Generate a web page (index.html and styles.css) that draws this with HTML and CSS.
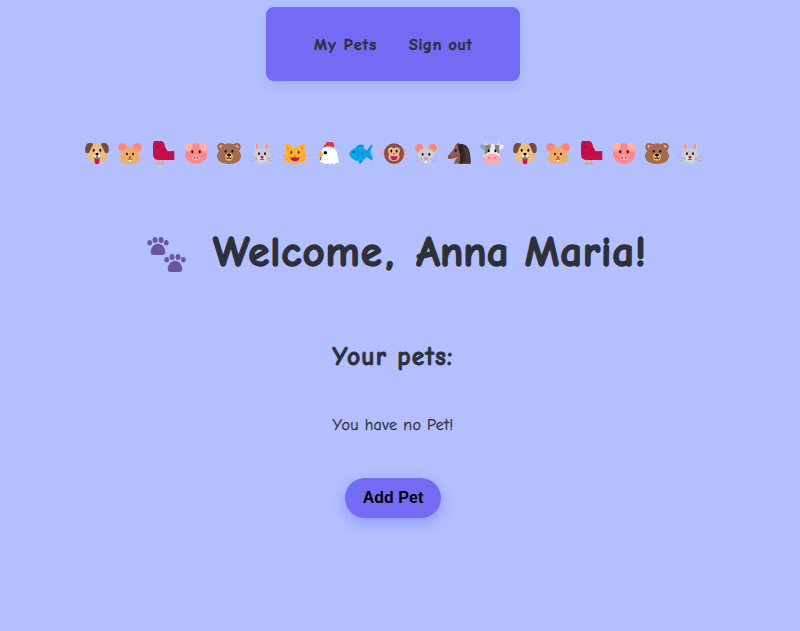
FILE: index.html
```html
<!DOCTYPE html>
<html lang="en">
<head>
<meta charset="utf-8">
<title>My Pets</title>
<link rel="stylesheet" href="styles.css">
</head>
<body>
<svg class="sprites" aria-hidden="true">
  <symbol id="dog" viewBox="0 0 72 72">
    <path fill="#eabd78" d="M17 9Q36 3 55 9L66 42Q66 65 36 65Q6 65 6 42Z"/>
    <path fill="#754b3d" d="M17 6Q3 4 1 20Q-2 37 8 37Q14 36 17 24L25 8ZM55 6Q69 4 71 20Q73 37 64 37Q58 36 55 24L47 8Z"/>
    <path fill="#f8dfba" d="M32 32Q36 27 40 32L48 44Q52 55 36 55Q20 55 24 44Z"/>
    <path fill="#d70c55" d="M29 53h14v9q-1 8-7 8t-7-8Z"/>
    <path fill="none" stroke="#111" stroke-width="2" d="M36 40v10M25 49q4 7 11 1q7 6 11-1"/>
    <ellipse cx="36" cy="39" rx="5" ry="3.5"/><ellipse cx="26" cy="28" rx="2.7" ry="4.5"/><ellipse cx="46" cy="28" rx="2.7" ry="4.5"/>
  </symbol>
  <symbol id="hamster" viewBox="0 0 72 72">
    <circle cx="15" cy="20" r="14" fill="#f3ae59"/><circle cx="57" cy="20" r="14" fill="#f3ae59"/>
    <circle cx="14" cy="19" r="12" fill="#ff827f"/><circle cx="58" cy="19" r="12" fill="#ff827f"/>
    <path fill="#f0ac60" d="M15 27Q36 10 57 27L67 50Q66 69 36 69Q6 69 5 50Z"/>
    <ellipse cx="36" cy="53" rx="13" ry="11" fill="#f3b768"/>
    <ellipse cx="27" cy="39" rx="2.6" ry="4"/><ellipse cx="45" cy="39" rx="2.6" ry="4"/>
    <ellipse cx="36" cy="48" rx="4" ry="3" fill="#ef3564"/><path fill="#fff" d="M33 56h6v5h-6z"/>
    <path fill="none" stroke="#47302d" stroke-width="2" d="M36 49v4M29 52q2 6 7 2q5 4 7-2"/>
  </symbol>
  <symbol id="bird" viewBox="0 0 72 72">
    <path fill="none" stroke="#f4a828" stroke-width="3.5" d="M24 56v12M36 56v12M14 68h15M29 68h14"/>
    <path fill="#f0a13a" d="M10 12L3 19L9 22Z"/>
    <path fill="#c90d49" d="M9 0H30Q41 2 42 17L50 31L70 30V57H23Q6 57 6 38V14Q6 4 9 0Z"/>
    <path fill="none" stroke="#a60b40" stroke-width="2" d="M33 22Q40 40 58 38"/>
    <circle cx="19" cy="17" r="3" fill="#40202d"/>
  </symbol>
  <symbol id="pig" viewBox="0 0 72 72">
    <ellipse cx="36" cy="38" rx="33" ry="31" fill="#ff8789"/>
    <path fill="#ffb39e" d="M5 7Q17 4 27 12Q24 28 9 33Q-1 25 5 7ZM67 7Q55 4 45 12Q48 28 63 33Q73 25 67 7Z"/>
    <ellipse cx="25" cy="32" rx="3" ry="4.5"/><ellipse cx="47" cy="32" rx="3" ry="4.5"/>
    <ellipse cx="36" cy="50" rx="12" ry="8" fill="#ffb2a5"/>
    <ellipse cx="31" cy="50" rx="2.5" ry="3.5" fill="#dd385c"/><ellipse cx="41" cy="50" rx="2.5" ry="3.5" fill="#dd385c"/>
  </symbol>
  <symbol id="bear" viewBox="0 0 72 72">
    <circle cx="13" cy="18" r="12" fill="#9b6245"/><circle cx="59" cy="18" r="12" fill="#9b6245"/>
    <circle cx="13" cy="17" r="6" fill="#eeb45e"/><circle cx="59" cy="17" r="6" fill="#eeb45e"/>
    <path fill="#a56b4c" d="M36 7Q58 7 65 29Q73 37 72 48Q68 69 36 69Q4 69 0 48Q-1 37 7 29Q14 7 36 7Z"/>
    <ellipse cx="36" cy="48" rx="12" ry="11" fill="#efb665"/>
    <ellipse cx="26" cy="31" rx="2.7" ry="4"/><ellipse cx="46" cy="31" rx="2.7" ry="4"/><ellipse cx="36" cy="42" rx="6" ry="3.5"/>
    <path fill="none" stroke="#111" stroke-width="2.3" d="M36 43v7M27 49q2 7 9 2q7 5 9-2"/>
  </symbol>
  <symbol id="rabbit" viewBox="0 0 72 72">
    <path fill="#cacbd5" d="M15 32V10Q18-4 26 6L31 23H41L46 6Q54-4 57 10V32Q65 40 63 54Q56 69 36 69Q16 69 9 54Q7 40 15 32Z"/>
    <path fill="#ff888b" d="M19 23Q16 2 23 7L27 23ZM53 23Q56 2 49 7L45 23Z"/>
    <ellipse cx="36" cy="53" rx="12" ry="10" fill="#dedee4"/>
    <path fill="none" stroke="#9899a5" stroke-width="1.7" d="M1 47l20 5M4 60l18-5M71 47l-20 5M68 60l-18-5"/>
    <ellipse cx="27" cy="38" rx="2.6" ry="4"/><ellipse cx="45" cy="38" rx="2.6" ry="4"/>
    <ellipse cx="36" cy="48" rx="5" ry="3.5" fill="#e51559"/>
    <path fill="none" stroke="#252530" stroke-width="2" d="M36 48v7M30 54q2 5 6 1q4 4 6-1"/>
  </symbol>
  <symbol id="cat" viewBox="0 0 72 72">
    <path fill="#ffb22c" d="M8 7Q19 8 27 18H45Q53 8 64 7L67 40L72 45L65 50L70 59L61 61Q52 69 36 69Q20 69 11 61L2 59L7 50L0 45L5 40Z"/>
    <path fill="#ff8d3d" d="M12 14L21 21L12 28ZM60 14L51 21L60 28Z"/>
    <path fill="none" stroke="#ef9b20" stroke-width="2.4" d="M1 44h13M3 58l12-6M71 44H58M69 58l-12-6"/>
    <ellipse cx="25" cy="34" rx="2.7" ry="5" fill="#4b301c"/><ellipse cx="47" cy="34" rx="2.7" ry="5" fill="#4b301c"/>
    <path fill="#b41871" d="M22 48Q29 51 36 48Q43 51 50 48Q48 61 36 61Q24 61 22 48Z"/><path fill="#ff5377" d="M32 43h8l-4 5Z"/>
  </symbol>
  <symbol id="chicken" viewBox="0 0 72 72">
    <path fill="#f42d32" d="M24 19Q21 12 29 10Q32-2 41 4Q53 0 55 13L51 27ZM13 47Q9 57 17 61L23 52Z"/>
    <path fill="#fff" stroke="#d8d9e0" stroke-width="2" d="M16 34Q18 16 39 17Q62 17 65 43L69 66L61 65L56 70L49 67L42 70L35 67L27 70L21 65L12 65L17 51Z"/>
    <path fill="#ffad25" d="M15 32Q6 36 4 44L18 46Q26 38 15 32Z"/><circle cx="28" cy="35" r="5"/>
  </symbol>
  <symbol id="fish" viewBox="0 0 72 72">
    <path fill="#0898df" d="M20 18Q29 6 46 13L42 24ZM28 55L32 69Q42 65 43 52Z"/>
    <path fill="#08a8ee" d="M0 39Q11 17 32 18Q46 19 53 29L66 11Q70 9 71 16Q63 27 65 37Q74 49 69 59L53 48Q44 60 26 60Q8 58 0 39Z"/>
    <path fill="none" stroke="#087fc1" stroke-width="2.3" d="M24 22q10 16 0 33M38 29l3 5l-3 5l3 5M48 33l3 5l-3 5M65 18L54 32M66 52L54 43"/>
    <circle cx="14" cy="33" r="3" fill="#16334a"/>
  </symbol>
  <symbol id="monkey" viewBox="0 0 72 72">
    <circle cx="8" cy="34" r="9" fill="#ffa18e"/><circle cx="64" cy="34" r="9" fill="#ffa18e"/>
    <ellipse cx="36" cy="38" rx="30" ry="31" fill="#8a5142"/>
    <path fill="#efb487" d="M36 22Q50 13 54 27Q55 33 51 38Q58 60 36 61Q14 60 21 38Q17 33 18 27Q22 13 36 22Z"/>
    <ellipse cx="28" cy="30" rx="2.8" ry="4.5"/><ellipse cx="44" cy="30" rx="2.8" ry="4.5"/><path fill="#bd1779" d="M25 46H47Q46 58 36 58Q26 58 25 46Z"/>
    <path stroke="#78503f" stroke-width="2" d="M33 38h6"/>
  </symbol>
  <symbol id="mouse" viewBox="0 0 72 72">
    <circle cx="17" cy="22" r="16" fill="#cacbd4"/><circle cx="55" cy="22" r="16" fill="#cacbd4"/>
    <circle cx="16" cy="21" r="13" fill="#ff8582"/><circle cx="56" cy="21" r="13" fill="#ff8582"/>
    <path fill="#cbccd5" d="M17 28Q36 15 55 28Q66 49 57 59Q47 64 36 70Q25 64 15 59Q6 49 17 28Z"/>
    <path fill="none" stroke="#a5a6b3" stroke-width="1.6" d="M3 48l21 5M6 61l18-6M69 48l-21 5M66 61l-18-6"/>
    <ellipse cx="26" cy="40" rx="2.7" ry="4"/><ellipse cx="46" cy="40" rx="2.7" ry="4"/><ellipse cx="36" cy="53" rx="5" ry="4" fill="#ff7b80"/><path fill="#fff" d="M34 60h4v5h-4z"/>
  </symbol>
  <symbol id="horse" viewBox="0 0 72 72">
    <path fill="#352a2e" d="M27 13Q38 4 54 12Q71 20 71 68H38Z"/>
    <path fill="#93594a" d="M27 10L34 5L42 17L47 68H21Q25 55 31 48Q20 55 8 54Q0 52 3 44L18 27Z"/>
    <path fill="#2b2227" d="M33 7L44 17Q52 32 47 68H37Q43 42 34 25Z"/>
    <path fill="none" stroke="#745244" stroke-width="2" d="M50 17q11 17 7 50M59 23q7 18 5 44"/>
    <ellipse cx="26" cy="29" rx="3" ry="4" fill="#1b1719"/><path stroke="#58362e" stroke-width="2" d="M4 48l9-2"/>
  </symbol>
  <symbol id="cow" viewBox="0 0 72 72">
    <path fill="#fde4b4" d="M16 0Q14 11 27 11L24 17Q8 14 16 0ZM56 0Q58 11 45 11L48 17Q64 14 56 0Z"/>
    <path fill="#9a9ba1" d="M17 17Q4 5 0 15Q3 28 17 27Z"/><path fill="#ece9ef" d="M55 17Q68 5 72 15Q69 28 55 27Z"/>
    <path fill="#eeeaf0" d="M15 12Q36 5 57 12L60 50H12Z"/>
    <path fill="#85868d" d="M15 12L33 10Q32 34 13 42ZM44 10L57 13L59 40Q44 33 44 10Z"/>
    <ellipse cx="36" cy="54" rx="25" ry="16" fill="#ffaaa8"/><ellipse cx="26" cy="29" rx="3" ry="4.5"/><ellipse cx="46" cy="29" rx="3" ry="4.5"/>
    <ellipse cx="27" cy="51" rx="2.5" ry="3.5" fill="#e76c84"/><ellipse cx="45" cy="51" rx="2.5" ry="3.5" fill="#e76c84"/>
  </symbol>
</svg>
<nav class="nav"><a href="#" class="nav-pets">My Pets</a><a href="#" class="nav-out">Sign out</a></nav>
<main>
  <div class="pets" aria-hidden="true">
    <svg><use href="#dog"/></svg><svg><use href="#hamster"/></svg><svg><use href="#bird"/></svg><svg><use href="#pig"/></svg><svg><use href="#bear"/></svg><svg><use href="#rabbit"/></svg><svg><use href="#cat"/></svg><svg><use href="#chicken"/></svg><svg><use href="#fish"/></svg><svg><use href="#monkey"/></svg><svg><use href="#mouse"/></svg><svg><use href="#horse"/></svg><svg><use href="#cow"/></svg><svg><use href="#dog"/></svg><svg><use href="#hamster"/></svg><svg><use href="#bird"/></svg><svg><use href="#pig"/></svg><svg><use href="#bear"/></svg><svg><use href="#rabbit"/></svg>
  </div>
  <div class="welcome">
    <svg class="paws" viewBox="0 0 117 105" fill="#68589b" aria-hidden="true">
      <g id="paw"><ellipse cx="8" cy="17" rx="7" ry="8"/><ellipse cx="24" cy="9" rx="7.5" ry="9"/><ellipse cx="42" cy="9" rx="7.5" ry="9"/><ellipse cx="58" cy="17" rx="7" ry="8"/><path d="M33 20C48 20 55 36 55 45Q55 54 45 54H21Q11 54 11 45C11 36 18 20 33 20Z"/></g>
      <use href="#paw" x="51" y="51"/>
    </svg>
    <h1>Welcome<span class="comma">, </span><span class="name">Anna</span> <span class="surname">Maria!</span></h1>
  </div>
  <h2>Your pets:</h2>
  <p>You have no Pet!</p>
  <button type="button">Add Pet</button>
</main>
</body>
</html>
```
FILE: styles.css
```css
* { box-sizing: border-box; }
body {
  margin: 0;
  padding: 7px 14px 0 0;
  min-height: 631px;
  background: #b3bfff;
  color: #2d3038;
  font-family: "Comic Sans MS", "Comic Neue", Lato, sans-serif;
}
.sprites { position: absolute; width: 0; height: 0; }
.nav {
  width: 254px;
  height: 74px;
  margin: 0 auto;
  padding: 1px 0 0 48px;
  display: flex;
  align-items: center;
  gap: 32px;
  border-radius: 8px;
  background: #746bf5;
  box-shadow: 0 4px 12px rgba(80, 85, 150, .15);
}
.nav a {
  color: inherit;
  text-decoration: none;
  font-size: 16px;
  font-weight: 900;
  line-height: 22px;
  white-space: nowrap;
  -webkit-text-stroke: .5px #2d3038;
}
.nav-pets { width: 63px; letter-spacing: 1.25px; }
.nav-out { width: 65px; letter-spacing: .75px; }
main { display: flex; flex-direction: column; align-items: center; }
.pets { display: flex; gap: 8.97px; margin: 60px 0 0 1px; }
.pets svg { width: 24px; height: 24px; flex: none; }
.welcome { display: flex; align-items: center; width: 492px; height: 60px; margin-top: 58px; }
.paws { width: 39px; height: 35px; margin: 3px 27px 0 0; flex: none; }
h1 {
  margin: -2px 0 0;
  font-size: 43px;
  line-height: 60px;
  font-weight: 700;
  letter-spacing: .9px;
  white-space: nowrap;
  -webkit-text-stroke: 1.4px #2d3038;
}
.comma { margin-left: 3px; letter-spacing: 3.5px; }
.name { letter-spacing: 0; }
.surname { letter-spacing: .8px; }
h2 {
  margin: 56px 0 0;
  font-size: 25.5px;
  line-height: 36px;
  font-weight: 700;
  letter-spacing: 1.15px;
  -webkit-text-stroke: .8px #2d3038;
}
p {
  margin: 38px 0 0;
  font-size: 16px;
  line-height: 24px;
  letter-spacing: .4px;
  -webkit-text-stroke: .3px #2d3038;
}
button {
  width: 96px;
  height: 40px;
  margin-top: 41px;
  padding: 0;
  border: 0;
  border-radius: 20px;
  background: #746bf5;
  box-shadow: 0 5px 14px rgba(100, 91, 245, .4);
  color: #000;
  font: 700 16px/20px "Liberation Sans", sans-serif;
}
```
